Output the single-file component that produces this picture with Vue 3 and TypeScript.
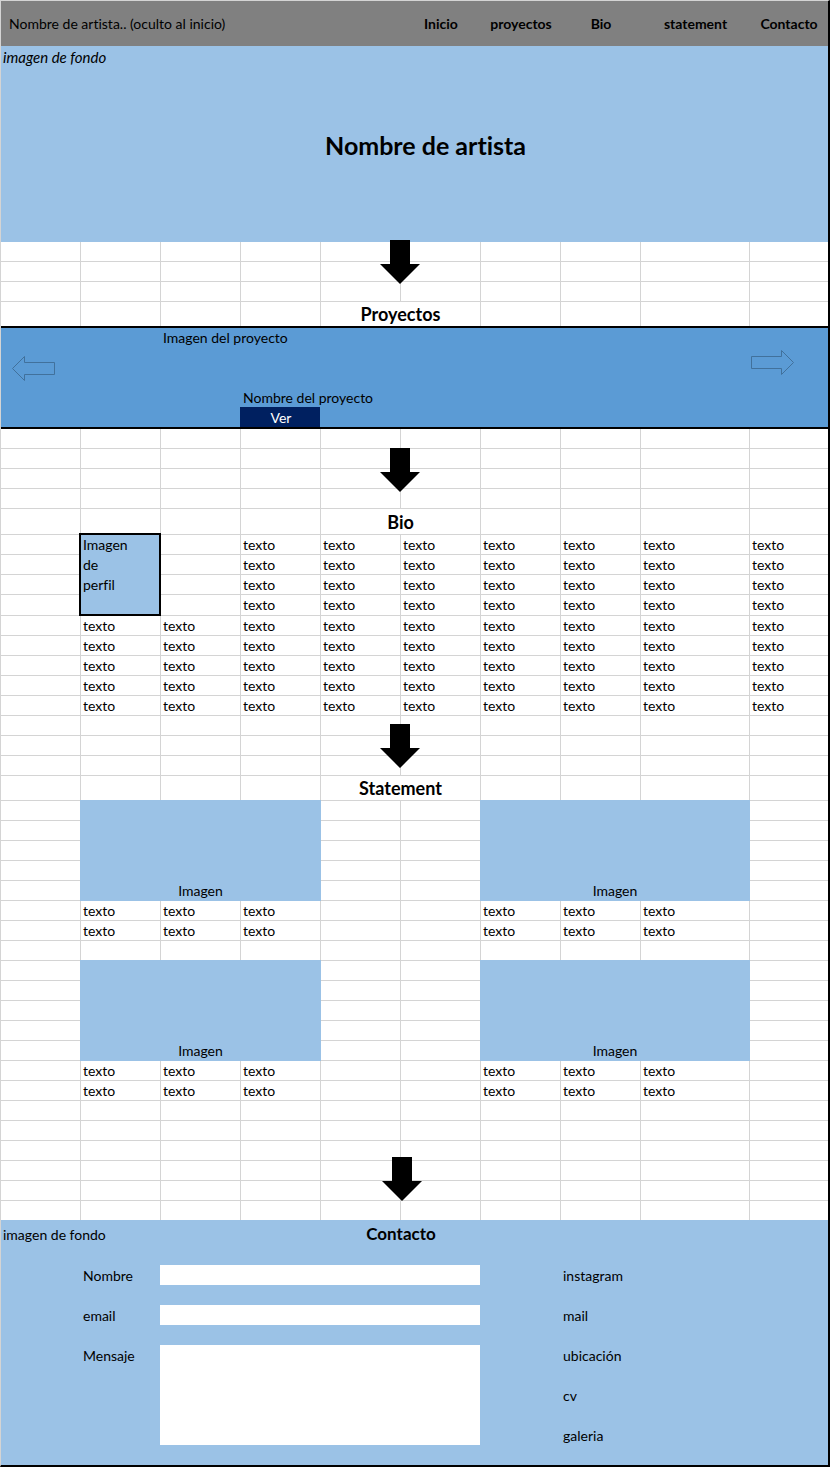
<script setup lang="ts">
import { ref } from 'vue'

type Kind = 'cell' | 'heading' | 'portrait' | 'picture'

interface Cell {
  kind: Kind
  text: string
  edge: boolean
  arrow: boolean
}

const COLUMNS = 10
const span: Record<Kind, number> = { cell: 1, heading: 2, portrait: 1, picture: 3 }

function make(kind: Kind, text = ''): Cell {
  return { kind, text, edge: false, arrow: false }
}

function cells(count: number, text = ''): Cell[] {
  return Array.from({ length: count }, () => make('cell', text))
}

/* The last cell of every row touches the page frame. */
function row(...items: Cell[]): Cell[] {
  items[items.length - 1].edge = true
  return items
}

function blank(count: number, arrowRow = -1): Cell[] {
  return Array.from({ length: count }, (_, i) => {
    const line = row(...cells(COLUMNS))
    if (i === arrowRow) line[4].arrow = true
    return line
  }).flat()
}

function title(text: string): Cell[] {
  return row(...cells(4), make('heading', text), ...cells(COLUMNS - 4 - span.heading))
}

function times(count: number, build: () => Cell[]): Cell[] {
  return Array.from({ length: count }, build).flat()
}

function gallery(): Cell[] {
  return [
    ...row(...cells(1), make('picture', 'Imagen'), ...cells(2), make('picture', 'Imagen'), ...cells(1)),
    ...times(4, () => row(...cells(4))),
    ...times(2, () => row(...cells(1), ...cells(3, 'texto'), ...cells(2), ...cells(3, 'texto'), ...cells(1))),
  ]
}

const intro = [...blank(3, 0), ...title('Proyectos')]

const bio = [
  ...blank(4, 0),
  ...title('Bio'),
  ...row(...cells(1), make('portrait', 'Imagen de perfil'), ...cells(1), ...cells(7, 'texto')),
  ...times(3, () => row(...cells(2), ...cells(7, 'texto'))),
  ...times(5, () => row(...cells(1), ...cells(9, 'texto'))),
]

const statement = [
  ...blank(3, 0),
  ...title('Statement'),
  ...gallery(),
  ...blank(1),
  ...gallery(),
  ...blank(6, 2),
]

const sheets = { intro, bio, statement }

const nav = [
  { label: 'Inicio', href: '#inicio' },
  { label: 'proyectos', href: '#intro' },
  { label: 'Bio', href: '#bio' },
  { label: 'statement', href: '#statement' },
  { label: 'Contacto', href: '#contacto' },
]

const links = ['instagram', 'mail', 'ubicación', 'cv', 'galeria']

const form = ref({ nombre: '', email: '', mensaje: '' })
</script>

<template>
  <div class="page">
    <header class="bar columns">
      <span class="brand">Nombre de artista.. (oculto al inicio)</span>
      <nav class="nav">
        <a v-for="item in nav" :key="item.label" :href="item.href">{{ item.label }}</a>
      </nav>
    </header>

    <section id="inicio" class="hero columns">
      <em class="hero-note">imagen de fondo</em>
      <h1>Nombre de artista</h1>
    </section>

    <template v-for="(list, name) in sheets" :key="name">
      <section :id="name" class="sheet columns" :class="name">
        <div v-for="(c, i) in list" :key="i" :class="[c.kind, { edge: c.edge }]">
          <h2 v-if="c.kind === 'heading'">{{ c.text }}</h2>
          <template v-else>{{ c.text }}</template>
          <svg v-if="c.arrow" class="arrow" viewBox="0 0 40 44" aria-hidden="true">
            <path d="M10 0H30V24H40L20 44L0 24H10Z" />
          </svg>
        </div>
      </section>

      <section v-if="name === 'intro'" class="project columns">
        <span class="project-image">Imagen del proyecto</span>
        <button type="button" class="step prev" aria-label="Anterior">
          <svg viewBox="0 0 44 26" aria-hidden="true">
            <path d="M0.5 12.5L12.5 0.5V6.5H42.5V18.5H12.5V24.5Z" />
          </svg>
        </button>
        <button type="button" class="step next" aria-label="Siguiente">
          <svg viewBox="0 0 44 26" aria-hidden="true">
            <path d="M42.5 12.5L30.5 0.5V6.5H0.5V18.5H30.5V24.5Z" />
          </svg>
        </button>
        <span class="project-name">Nombre del proyecto</span>
        <button type="button" class="view">Ver</button>
      </section>
    </template>

    <section id="contacto" class="contact columns">
      <span class="contact-note">imagen de fondo</span>
      <h2 class="contact-title">Contacto</h2>
      <form class="form" @submit.prevent>
        <label for="nombre">Nombre</label>
        <input id="nombre" v-model="form.nombre" type="text" />
        <label for="email">email</label>
        <input id="email" v-model="form.email" type="email" />
        <label for="mensaje">Mensaje</label>
        <textarea id="mensaje" v-model="form.mensaje"></textarea>
      </form>
      <ul class="links">
        <li v-for="link in links" :key="link"><a href="#contacto">{{ link }}</a></li>
      </ul>
    </section>
  </div>
</template>

<style>
body {
  margin: 0;
  background: #fff;
}
</style>

<style scoped>
.page {
  --line: #d4d4d4;
  --light: #9bc2e6;
  border: 1px solid var(--line);
  border-right: 2px solid #000;
  border-bottom: 2px solid #000;
  font: 14px/20px Lato, "Liberation Sans", sans-serif;
  font-variant-ligatures: none;
  color: #000;
  background: #fff;
}

.columns {
  display: grid;
  grid-template-columns: repeat(8, minmax(0, 80fr)) minmax(0, 109fr) minmax(0, 78fr);
}

a {
  color: inherit;
  text-decoration: none;
}

h1,
h2 {
  margin: 0;
  font-weight: 700;
}

h2 {
  font-size: 18px;
  line-height: 24px;
}

.bar {
  min-height: 45px;
  align-items: center;
  background: #808080;
}

.brand {
  grid-column: 1 / 6;
  padding-left: 8px;
}

.nav {
  grid-column: 6 / 11;
  display: grid;
  grid-template-columns: subgrid;
  font-weight: 700;
  text-align: center;
}

.hero {
  grid-template-rows: 20px auto;
  padding-bottom: 80px;
  background: var(--light);
}

.hero-note {
  grid-column: 1 / 6;
  padding: 1px 0 0 2px;
  font-size: 15px;
}

.hero h1 {
  grid-column: 5 / 11;
  padding: 63px 0 1px 4px;
  font-size: 25px;
  line-height: 32px;
}

.sheet {
  grid-auto-rows: 20px;
}

.intro {
  grid-template-rows: repeat(3, 20px) 24px;
}

.bio {
  grid-template-rows: repeat(4, 20px) 26px repeat(3, 20px) 21px;
}

.statement {
  grid-template-rows: repeat(3, 20px) 25px;
}

.cell,
.heading {
  position: relative;
  padding-left: 2px;
  border-right: 1px solid var(--line);
  border-bottom: 1px solid var(--line);
}

.edge {
  border-right: 0;
}

.heading {
  grid-column: span 2;
  padding: 1px 0 0;
  text-align: center;
}

.heading h2 {
  line-height: 23px;
}

.bio .heading h2 {
  line-height: 24px;
}

.intro .heading,
.intro .heading ~ .cell,
.intro .cell:nth-last-child(-n + 9) {
  border-bottom: 0;
}

.portrait {
  z-index: 1;
  grid-row: span 4;
  margin: -2px 0 0 -2px;
  padding: 0 28px 0 2px;
  border: 2px solid #000;
  background: var(--light);
}

.picture {
  z-index: 1;
  display: flex;
  grid-column: span 3;
  grid-row: span 5;
  align-items: flex-end;
  justify-content: center;
  margin: -1px 0 0 -1px;
  background: var(--light);
}

.arrow {
  position: absolute;
  z-index: 2;
  left: 100%;
  width: 40px;
  height: 44px;
  transform: translateX(-50%);
}

.intro .arrow {
  top: -2px;
}

.bio .arrow {
  top: 19px;
}

.statement .arrow {
  top: 8px;
}

.statement .cell:nth-last-child(-n + 60) .arrow {
  top: 16px;
  left: calc(100% + 2px);
}

.project {
  grid-template-rows: 20px 39px 20px 20px;
  border-top: 2px solid #000;
  border-bottom: 2px solid #000;
  background: #5b9bd5;
}

.project-image {
  grid-area: 1 / 3 / 2 / 8;
  padding-left: 2px;
}

.project-name {
  grid-area: 3 / 4 / 4 / 8;
  padding: 1px 0 0 2px;
}

.step {
  padding: 0;
  border: 0;
  background: none;
  align-self: start;
  justify-self: start;
}

.step svg {
  display: block;
  width: 44px;
  height: 26px;
}

.step path {
  fill: none;
  stroke: #41719c;
}

.prev {
  grid-area: 1 / 1 / 4 / 2;
  margin: 28px 0 0 11px;
}

.next {
  grid-area: 1 / 10 / 4 / 11;
  margin: 22px 0 0 1px;
}

.view {
  grid-area: 4 / 4 / 5 / 5;
  margin: 0 1px 0 -1px;
  padding: 2px 0 0 2px;
  border: 0;
  font: inherit;
  line-height: 18px;
  color: #fff;
  background: #002060;
}

.contact {
  position: relative;
  z-index: 1;
  grid-template-rows: 25px auto;
  row-gap: 20px;
  margin-top: -1px;
  padding-bottom: 20px;
  background: var(--light);
}

.contact-note {
  grid-column: 1 / 4;
  padding: 5px 0 0 2px;
}

.contact-title {
  grid-column: 5 / 7;
  padding-top: 2px;
  font-size: 17px;
  text-align: center;
}

.form {
  grid-column: 2 / 7;
  display: grid;
  grid-template-columns: subgrid;
  grid-template-rows: 20px 20px 100px;
  row-gap: 20px;
}

.form label {
  grid-column: 1;
  padding: 1px 0 0 2px;
}

.form input,
.form textarea {
  grid-column: 2 / 6;
  box-sizing: border-box;
  height: 100%;
  margin: 0 1px 0 -1px;
  padding: 0 2px;
  border: 0;
  font: inherit;
  background: #fff;
  resize: none;
}

.links {
  grid-column: 8 / 11;
  display: grid;
  grid-auto-rows: 20px;
  align-content: start;
  row-gap: 20px;
  box-sizing: border-box;
  height: 180px;
  margin: 0;
  padding: 1px 0 0 2px;
  list-style: none;
}
</style>
